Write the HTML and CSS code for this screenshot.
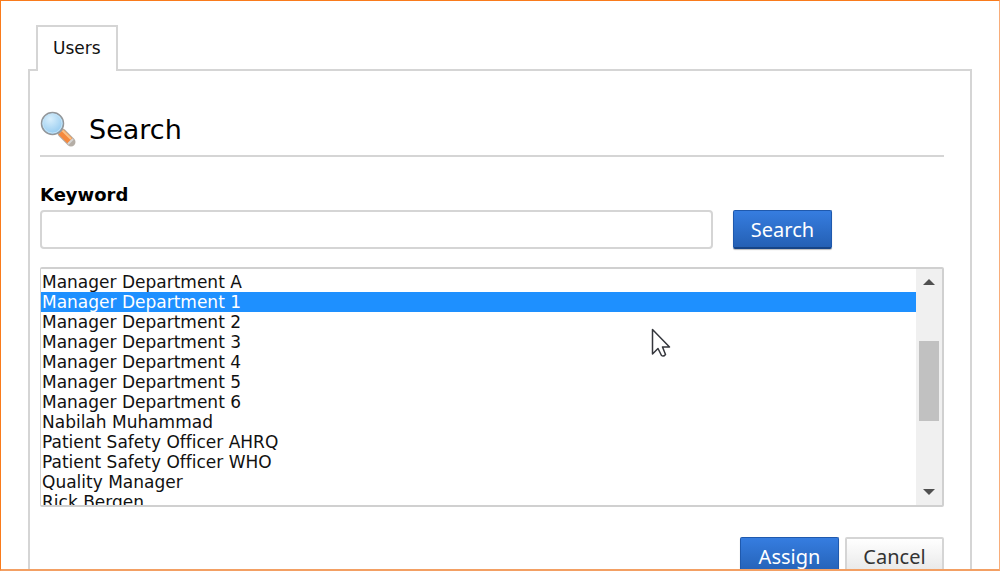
FILE: index.html
```html
<!DOCTYPE html>
<html lang="en">
<head>
    <meta charset="UTF-8">
    <meta name="viewport" content="width=device-width, initial-scale=1.0">
    <title>Users</title>
    <link rel="stylesheet" href="styles.css">
</head>
<body>
    <div class="window">
        <nav class="tabs">
            <a class="tab" href="#users">Users</a>
        </nav>

        <main class="panel" id="users">
            <h2 class="title">
                <svg class="title-icon" width="36" height="36" viewBox="0 0 36 36">
                    <defs>
                        <radialGradient id="glass" cx="0.4" cy="0.3" r="0.75">
                            <stop offset="0" stop-color="#d9effc" />
                            <stop offset="1" stop-color="#8fc8ef" />
                        </radialGradient>
                    </defs>
                    <path d="M18 19 L23 24" stroke="#8a8a8a" stroke-width="5" />
                    <path d="M19 20 L22 23" stroke="#d8d8d8" stroke-width="2" />
                    <path d="M22 22 L31 31" stroke="#b5aea6" stroke-width="9" stroke-linecap="round" />
                    <path d="M21 21 L30 30" stroke="#f5883c" stroke-width="7" />
                    <path d="M22.500 19.500 L31 28" stroke="#fbc184" stroke-width="2" />
                    <path d="M28 33 L33 28" stroke="#d4d4d4" stroke-width="2" />
                    <circle cx="12.500" cy="12.500" r="11" fill="url(#glass)" stroke="#94979a" stroke-width="1.500" />
                    <circle cx="12.500" cy="12.500" r="9.500" fill="none" stroke="#c4e3f6" stroke-width="1" />
                </svg>
                Search
            </h2>

            <form>
                <label class="keyword-label" for="keyword">Keyword</label>
                <div class="keyword-row">
                    <input class="keyword" type="text" id="keyword">
                    <button class="btn btn-primary" type="button">Search</button>
                </div>

                <div class="list">
                    <select class="users" size="12" aria-label="Users">
                        <option>Manager Department A</option>
                        <option selected>Manager Department 1</option>
                        <option>Manager Department 2</option>
                        <option>Manager Department 3</option>
                        <option>Manager Department 4</option>
                        <option>Manager Department 5</option>
                        <option>Manager Department 6</option>
                        <option>Nabilah Muhammad</option>
                        <option>Patient Safety Officer AHRQ</option>
                        <option>Patient Safety Officer WHO</option>
                        <option>Quality Manager</option>
                        <option>Rick Bergen</option>
                    </select>
                    <div class="scrollbar">
                        <svg width="12" height="6" viewBox="0 0 12 6"><path d="M0 6 L6 0 L12 6 Z" fill="#505050" /></svg>
                        <div class="track"><div class="thumb"></div></div>
                        <svg width="12" height="6" viewBox="0 0 12 6"><path d="M0 0 L6 6 L12 0 Z" fill="#505050" /></svg>
                    </div>
                </div>

                <div class="actions">
                    <button class="btn btn-primary" type="button">Assign</button>
                    <button class="btn" type="button">Cancel</button>
                </div>
            </form>
        </main>

        <!-- Mouse pointer -->
        <svg class="pointer" width="20" height="30" viewBox="0 0 20 30">
            <path d="M1.500 1.500 V26 L7 20.500 L10.500 27.500 Q12.500 29 14.500 26.500 L11.500 19 H18.500 Z" fill="#fff" stroke="#34363c" stroke-width="1.500" stroke-linejoin="round" />
        </svg>
    </div>
</body>
</html>
```
FILE: styles.css
```css
* {
    box-sizing: border-box;
}

body {
    margin: 0;
    font-family: Verdana, "DejaVu Sans", sans-serif;
    font-size: 17px;
    font-variant-ligatures: none;
    color: #000;
    background-color: #fff;
}

.window {
    position: relative;
    height: 100vh;
    padding: 24px 27px 0;
    border: 1px solid #f97b1c;
    border-right-color: #f8ad7a;
    border-bottom: 2px solid #f3a064;
    overflow: hidden;
}

/* Tabs */
.tabs {
    display: flex;
    padding-left: 8px;
}

.tab {
    position: relative;
    z-index: 1;
    height: 46px;
    margin-bottom: -2px;
    padding: 0 15px;
    line-height: 42px;
    color: #111;
    text-decoration: none;
    background-color: #fff;
    border: 2px solid #d5d5d5;
    border-bottom: none;
}

.panel {
    min-height: 100vh;
    padding: 40px 26px 0 10px;
    border: 2px solid #d5d5d5;
}

/* Heading */
.title {
    display: flex;
    align-items: center;
    gap: 13px;
    height: 46px;
    margin: 0 0 27px;
    padding-bottom: 8px;
    font-size: 27px;
    font-weight: normal;
    border-bottom: 2px solid #d5d5d5;
}

/* Keyword */
.keyword-label {
    display: block;
    margin-bottom: 4px;
    font-size: 18px;
    line-height: 22px;
    font-weight: bold;
}

.keyword-row {
    display: flex;
    gap: 20px;
    margin-bottom: 18px;
    padding-right: 112px;
}

.keyword {
    flex: 1;
    min-width: 0;
    height: 39px;
    padding: 0 8px;
    font: inherit;
    border: 2px solid #d5d5d5;
    border-radius: 4px;
}

/* Buttons */
.btn {
    width: 99px;
    height: 39px;
    padding: 0;
    font-family: Tahoma, "Noto Sans", sans-serif;
    font-size: 20px;
    color: #333;
    background: linear-gradient(#fff, #e6e6e6);
    border: 2px solid #d5d5d5;
    border-radius: 2px;
}

.btn-primary {
    color: #fff;
    background: linear-gradient(#367de0, #2460b4);
    border: 1px solid #1f59ad;
    border-bottom: 2px solid #164486;
    box-shadow: 0 1px 1px #bbb;
}

/* User list */
.list {
    display: flex;
    height: 240px;
    margin-bottom: 30px;
    border: 2px solid #d0d0d0;
    border-left-width: 1px;
    border-radius: 2px;
}

.users {
    flex: 1;
    height: 100%;
    padding: 3px 0 0;
    font: inherit;
    font-variant-ligatures: none;
    color: #111;
    background-color: #fff;
    border: none;
    outline: none;
    overflow: hidden;
}

.users option {
    min-height: 20px;
    padding: 0 0 0 1px;
    line-height: 20px;
}

.users option:checked {
    color: #fff;
    -webkit-text-fill-color: #fff;
    background: #1e90ff linear-gradient(#1e90ff, #1e90ff);
}

.scrollbar {
    display: flex;
    flex-direction: column;
    align-items: center;
    width: 26px;
    padding: 10px 0;
    background-color: #f0f0f0;
}

.track {
    flex: 1;
    width: 20px;
    padding-top: 56px;
}

.thumb {
    height: 80px;
    background-color: #c1c1c1;
}

.actions {
    display: flex;
    justify-content: flex-end;
    gap: 6px;
}

.pointer {
    position: absolute;
    left: 650px;
    top: 327px;
}
```
